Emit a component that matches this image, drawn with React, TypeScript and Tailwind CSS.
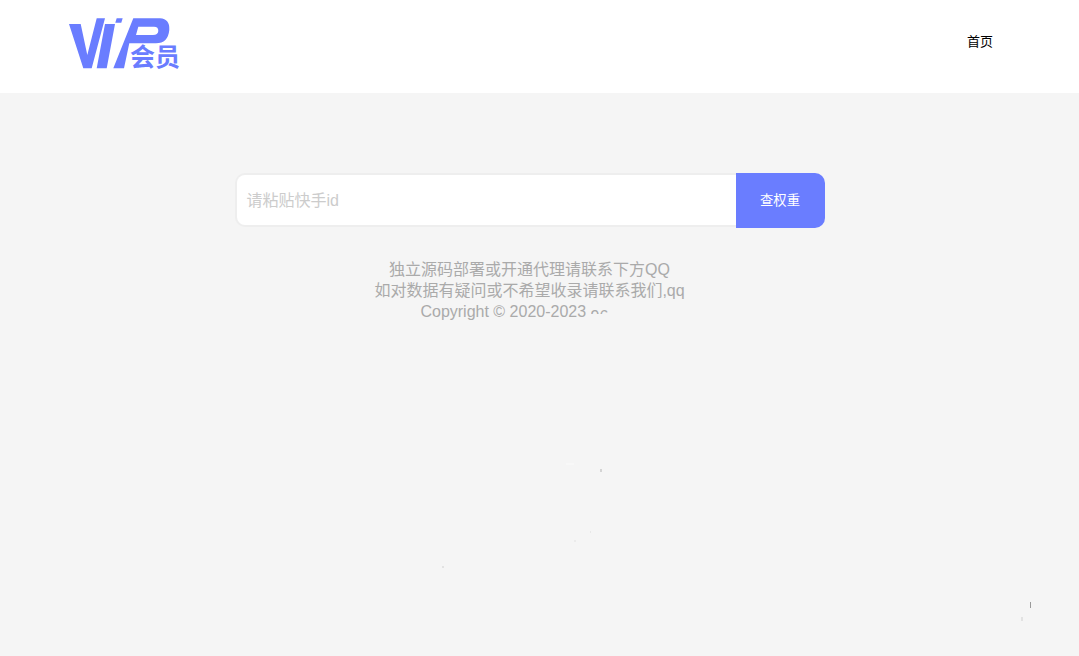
export default function App() {
  return (
    <div className="relative min-h-[656px] overflow-hidden bg-[#f5f5f5] font-['Liberation_Sans','Noto_Sans_CJK_SC',sans-serif]">
      <header className="flex h-[93px] items-start justify-between bg-white pl-[69px] pr-[86px]">
        <div className="relative h-[93px] w-[112px]">
          <svg width="112" height="93" viewBox="0 0 112 93" fill="#6a7dff">
            <polygon points="0,24 11.7,24 18.3,55 27.7,18.3 36,18.3 22.7,68.3 14.3,68.3" />
            <polygon points="36,24 46,24 37.7,68.3 27.7,68.3" />
            <polygon points="47.7,18.3 53.7,18.3 52.3,22.7 46.3,22.7" />
            <path
              fillRule="evenodd"
              d="M64.3 18.3 H91 Q101 19 100.3 30 Q99 43.3 87 43.3 H60.3 L55 68.3 H44.3 Z M69.3 26.7 L67 35 H84 Q89 35 89.3 31 Q89.5 26.7 85 26.7 Z"
            />
          </svg>
          <span className="absolute left-[61px] top-[43px] font-['Noto_Sans_CJK_SC',sans-serif] text-[25px] font-bold leading-[25px] whitespace-nowrap text-[#6a7dff]">
            会员
          </span>
        </div>
        <a className="mt-[32px] text-[13px] leading-[20px] text-black">首页</a>
      </header>
      <main className="flex flex-col items-center pr-[20px] pt-[80px]">
        <div className="flex h-[55px] w-[590px]">
          <div className="flex h-[54px] flex-1 items-center rounded-l-[10px] border-2 border-r-0 border-[#eeeeee] bg-white pl-[10px] pt-[1px] text-[16px] text-[#cccccc]">
            请粘贴快手id
          </div>
          <button className="h-[55px] w-[89px] rounded-r-[10px] bg-[#6a7dff] text-[13.33px] text-white">查权重</button>
        </div>
        <div className="mt-[31px] text-center text-[16px] leading-[21px] text-[#aaaaaa]">
          <p>独立源码部署或开通代理请联系下方QQ</p>
          <p>如对数据有疑问或不希望收录请联系我们,qq</p>
          <p className="relative -left-[15px]">
            Copyright © 2020-2023{" "}
            <span className="relative -top-[3px] inline-block h-[4px] w-[18px] overflow-hidden text-left align-baseline">
              <span className="-mt-[1px] block leading-[16px]">96</span>
            </span>
          </p>
        </div>
      </main>
      <svg className="pointer-events-none absolute inset-0" width="1079" height="656" viewBox="0 0 1079 656">
        <rect x="600" y="469" width="2" height="3" fill="#d4d4d4" />
        <rect x="566" y="463" width="8" height="2" fill="#f8f8f8" />
        <rect x="442" y="566" width="2" height="2" fill="#e2e2e2" />
        <rect x="590" y="531" width="1" height="2" fill="#e8e8e8" />
        <rect x="574" y="540" width="2" height="2" fill="#ebebeb" />
        <rect x="1030" y="602" width="1" height="6" fill="#9a9a9a" />
        <rect x="1021" y="617" width="2" height="4" fill="#e2e2e2" />
      </svg>
    </div>
  );
}
